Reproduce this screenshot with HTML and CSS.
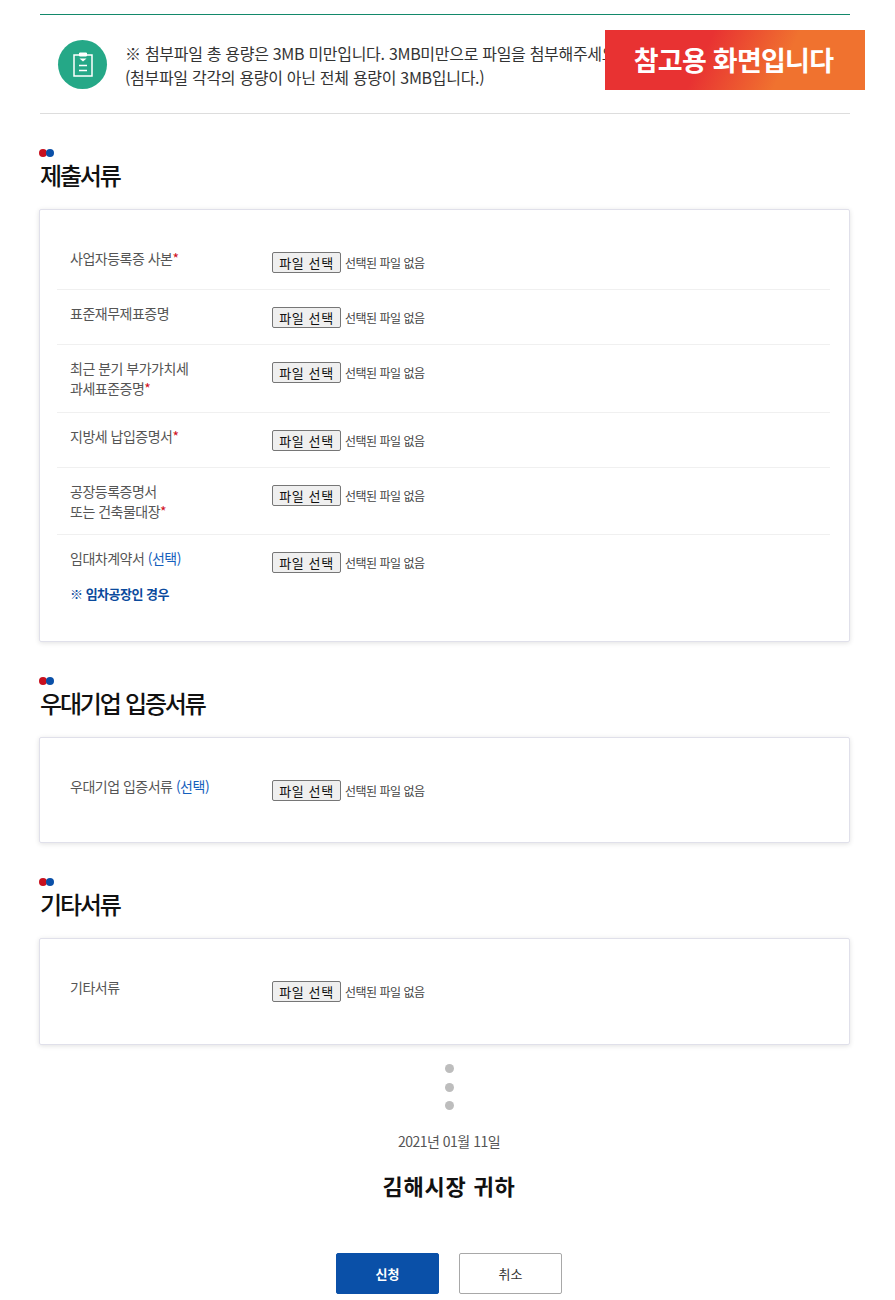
FILE: index.html
```html
<!DOCTYPE html>
<html lang="ko">
<head>
<meta charset="utf-8">
<title>제출서류</title>
<link rel="stylesheet" href="styles.css">
</head>
<body>
<div class="banner">참고용 화면입니다</div>
<main class="page">
  <section class="notice">
    <span class="notice-icon">
      <svg width="20" height="25" viewBox="0 0 20 25" fill="none" stroke="#fff" stroke-width="1.5">
        <path d="M6.5 3H1V24H19V3H13.5"/>
        <path d="M6.5 1H13.5V4H6.5Z" fill="#fff" stroke-width="1"/>
        <path d="M6.5 6.5L10 9.5L13.5 6.5Z" fill="#fff" stroke="none"/>
        <path d="M6 13.5H14M6 18.5H14" stroke-width="1.6"/>
      </svg>
    </span>
    <p class="notice-text">※ 첨부파일 총 용량은 3MB 미만입니다. 3MB미만으로 파일을 첨부해주세요.<br>(첨부파일 각각의 용량이 아닌 전체 용량이 3MB입니다.)</p>
  </section>

  <h2 class="section-title"><span class="dots"><i class="dot red"></i><i class="dot blue"></i></span>제출서류</h2>
  <section class="card">
    <div class="row">
      <div class="label">사업자등록증 사본<em class="req">*</em></div>
      <div class="file"><span class="file-btn">파일 선택</span><span class="file-name">선택된 파일 없음</span></div>
    </div>
    <div class="row">
      <div class="label">표준재무제표증명</div>
      <div class="file"><span class="file-btn">파일 선택</span><span class="file-name">선택된 파일 없음</span></div>
    </div>
    <div class="row">
      <div class="label">최근 분기 부가가치세<br>과세표준증명<em class="req">*</em></div>
      <div class="file"><span class="file-btn">파일 선택</span><span class="file-name">선택된 파일 없음</span></div>
    </div>
    <div class="row">
      <div class="label">지방세 납입증명서<em class="req">*</em></div>
      <div class="file"><span class="file-btn">파일 선택</span><span class="file-name">선택된 파일 없음</span></div>
    </div>
    <div class="row short">
      <div class="label">공장등록증명서<br>또는 건축물대장<em class="req">*</em></div>
      <div class="file"><span class="file-btn">파일 선택</span><span class="file-name">선택된 파일 없음</span></div>
    </div>
    <div class="row last">
      <div class="label">임대차계약서 <span class="opt">(선택)</span>
        <p class="hint">※ <b>임차공장인 경우</b></p>
      </div>
      <div class="file"><span class="file-btn">파일 선택</span><span class="file-name">선택된 파일 없음</span></div>
    </div>
  </section>

  <h2 class="section-title"><span class="dots"><i class="dot red"></i><i class="dot blue"></i></span>우대기업 입증서류</h2>
  <section class="card">
    <div class="row last single">
      <div class="label">우대기업 입증서류 <span class="opt">(선택)</span></div>
      <div class="file"><span class="file-btn">파일 선택</span><span class="file-name">선택된 파일 없음</span></div>
    </div>
  </section>

  <h2 class="section-title"><span class="dots"><i class="dot red"></i><i class="dot blue"></i></span>기타서류</h2>
  <section class="card">
    <div class="row last single tall">
      <div class="label">기타서류</div>
      <div class="file"><span class="file-btn">파일 선택</span><span class="file-name">선택된 파일 없음</span></div>
    </div>
  </section>

  <div class="closing">
    <div class="vdots"><i></i><i></i><i></i></div>
    <p class="date">2021년 01월 11일</p>
    <p class="addressee">김해시장 귀하</p>
    <div class="actions">
      <a class="btn primary">신청</a>
      <a class="btn ghost">취소</a>
    </div>
  </div>
</main>
</body>
</html>
```

FILE: styles.css
```css
* { box-sizing: border-box; }
html, body { margin: 0; padding: 0; }
body {
  background: #fff;
  color: #333;
  font-family: "Noto Sans CJK KR", "Noto Sans", sans-serif;
  position: relative;
  height: 1300px;
  overflow: hidden;
}
.banner {
  position: absolute;
  left: 605px;
  top: 30px;
  width: 260px;
  height: 60px;
  padding-right: 3px;
  background: linear-gradient(115deg, #e83232 38%, #f0722f 68%);
  color: #fff;
  font-size: 27px;
  font-weight: 700;
  letter-spacing: -0.75px;
  line-height: 60px;
  text-align: center;
}
.page { padding: 14px 45px 0 40px; }
.notice {
  display: flex;
  align-items: flex-start;
  height: 100px;
  border-top: 1px solid #13896b;
  border-bottom: 1px solid #ddd;
  padding: 25px 0 0 18px;
}
.notice-icon {
  flex: none;
  width: 49px;
  height: 49px;
  border-radius: 50%;
  background: #25a887;
  display: flex;
  align-items: center;
  justify-content: center;
}
.notice-text {
  margin: 1px 0 0 18px;
  font-size: 16px;
  line-height: 24px;
  letter-spacing: -0.3px;
  color: #333;
  white-space: nowrap;
}
.section-title {
  margin: 35px 0 17px;
  font-size: 24px;
  line-height: 34px;
  font-weight: 500;
  letter-spacing: -2.2px;
  word-spacing: 1px;
  color: #111;
}
.section-title .dots { display: flex; height: 7px; margin: 0 0 2px -1px; }
.dot { display: block; width: 8px; height: 8px; border-radius: 50%; }
.dot.blue { margin-left: -1px; }
.dot.red { background: #c8101e; }
.dot.blue { background: #0a50a8; }
.card {
  margin-left: -1px;
  border: 1px solid #e0e0ea;
  border-radius: 2px;
  box-shadow: 0 1px 5px rgba(0, 0, 0, .12);
  padding: 25px 19px 0 17px;
}
.row {
  display: flex;
  align-items: flex-start;
  border-bottom: 1px solid #f0f0f0;
  min-height: 55px;
  padding-left: 13px;
}
.row.last { border-bottom: 0; padding-bottom: 23px; }
.row.single { padding-bottom: 32px; }
.row.tall { padding-bottom: 33px; }
.label {
  flex: none;
  width: 202px;
  padding: 13px 0 14px;
  font-size: 14px;
  line-height: 20px;
  letter-spacing: -0.5px;
  color: #555;
}
.row.short .label { padding-bottom: 13px; }
.req { color: #d0101e; font-style: normal; }
.opt { color: #1560bd; font-weight: 400; }
.hint {
  margin: 16px 0 0;
  font-size: 13px;
  color: #0a4a9c;
  letter-spacing: -0.5px;
}
.hint b { font-weight: 700; }
.file { display: flex; align-items: center; padding-top: 17px; }
.file-btn {
  width: 69px;
  height: 21px;
  border: 1px solid #767676;
  border-radius: 2px;
  background: #efefef;
  color: #111;
  font-size: 13px;
  line-height: 19px;
  letter-spacing: 0.6px;
  text-align: center;
}
.file-name {
  margin-left: 4px;
  font-size: 12px;
  letter-spacing: -0.5px;
  color: #444;
}
.closing { margin-right: -8px; }
.vdots {
  display: flex;
  flex-direction: column;
  align-items: center;
  gap: 9.5px;
  margin-top: 19px;
}
.vdots i { width: 9px; height: 9px; border-radius: 50%; background: #bdbdbd; }
.date {
  margin: 21px 0 0;
  text-align: center;
  font-size: 14px;
  line-height: 20px;
  letter-spacing: -0.5px;
  color: #555;
}
.addressee {
  margin: 18px 0 0;
  text-align: center;
  font-size: 22px;
  line-height: 32px;
  font-weight: 700;
  letter-spacing: 0.8px;
  color: #111;
}
.actions { display: flex; justify-content: center; gap: 20px; margin-top: 52px; }
.btn {
  width: 103px;
  height: 41px;
  border-radius: 2px;
  text-align: center;
  font-size: 13px;
  line-height: 39px;
}
.btn.primary { background: #0a50a8; border: 1px solid #0a50a8; color: #fff; font-weight: 700; }
.btn.ghost { background: #fff; border: 1px solid #a8a8a8; color: #333; }
```
